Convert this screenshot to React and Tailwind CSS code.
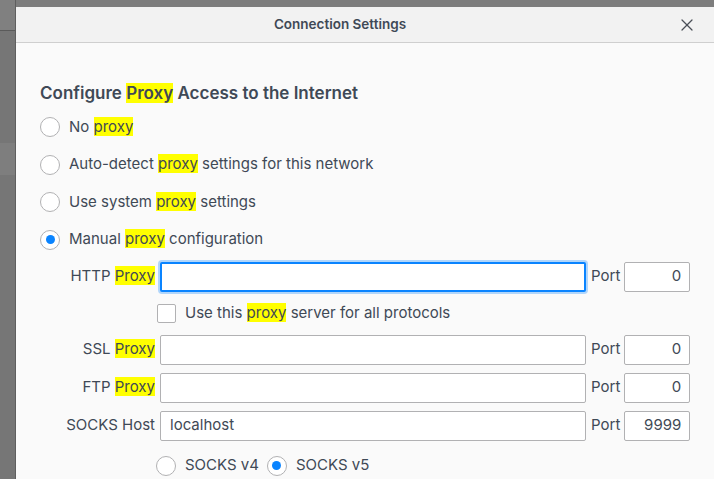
import { X } from 'lucide-react';

const ink = 'text-[#3f4956]';

// Yellow search-match highlight
function Hl({ children }) {
    return <span className="bg-[#ffff00]">{children}</span>;
}

function Radio({ checked }) {
    return (
        <span className="w-[20px] h-[20px] flex-shrink-0 rounded-full border border-[#b1b1b3] bg-white flex items-center justify-center">
            {checked && <span className="w-[9px] h-[9px] rounded-full bg-[#0a84ff]" />}
        </span>
    );
}

function RadioRow({ checked, children }) {
    return (
        <div className="flex items-center gap-[9px] h-[20px]">
            <Radio checked={checked} />
            <span className={`text-[15px] ${ink}`}>{children}</span>
        </div>
    );
}

function ProxyRow({ label, value, port, focused }) {
    return (
        <div className="flex items-center h-[30px]">
            <span className={`w-[115px] text-right text-[15px] ${ink} whitespace-nowrap`}>{label}</span>
            <div
                className={`ml-[5px] w-[426px] h-[30px] rounded-[2px] bg-white flex items-center px-[9px] text-[15px] ${ink} ${
                    focused
                        ? 'border-2 border-[#0a84ff] shadow-[0_0_0_2px_rgba(10,132,255,0.3)]'
                        : 'border border-[#b1b1b3]'
                }`}
            >
                {value}
            </div>
            <span className={`ml-[5px] text-[15px] ${ink}`}>Port</span>
            <div className={`ml-[4px] w-[66px] h-[30px] rounded-[2px] border border-[#b1b1b3] bg-white flex items-center justify-end pr-[8px] text-[15px] ${ink}`}>
                {port}
            </div>
        </div>
    );
}

export default function App() {
    return (
        <div className="w-[714px] h-[479px] overflow-hidden bg-[#767676] flex" style={{ fontFamily: 'Inter, "Noto Sans", sans-serif' }}>
            {/* Backdrop strip of the window behind */}
            <div className="w-[16px] flex-shrink-0 flex flex-col border-r border-[#5f5f5f]">
                <div className="h-[31px] bg-[#808080] border-b border-[#5a5a5a]" />
                <div className="h-[112px]" />
                <div className="h-[32px] bg-[#7e7e7e]" />
            </div>

            <div className="flex-1 flex flex-col pt-[7px] bg-[#7d7d7d]">
                <div className="flex-1 bg-[#fafafa] flex flex-col">
                    {/* Header */}
                    <div className="h-[36px] flex-shrink-0 bg-[#f2f2f2] border-b border-[#cfcfcf] flex items-center">
                        <span className={`flex-1 text-center pr-[13px] text-[13.5px] font-semibold ${ink}`}>Connection Settings</span>
                        <span className="w-[20px] h-[20px] mr-[17px] flex items-center justify-center">
                            <X className="w-[20px] h-[20px] text-[#4a4f57]" strokeWidth={1.5} />
                        </span>
                    </div>

                    {/* Body */}
                    <div className="pl-[24px] pt-[40px] flex flex-col">
                        <h1 className={`text-[17px] font-semibold leading-[21px] ${ink}`}>
                            Configure <Hl>Proxy</Hl> Access to the Internet
                        </h1>

                        <div className="mt-[13px] flex flex-col gap-[17.5px]">
                            <RadioRow>No <Hl>proxy</Hl></RadioRow>
                            <RadioRow>Auto-detect <Hl>proxy</Hl> settings for this network</RadioRow>
                            <RadioRow>Use system <Hl>proxy</Hl> settings</RadioRow>
                            <RadioRow checked>Manual <Hl>proxy</Hl> configuration</RadioRow>
                        </div>

                        <div className="mt-[12px] flex flex-col">
                            <ProxyRow label={<>HTTP <Hl>Proxy</Hl></>} port="0" focused />

                            <div className="mt-[12px] ml-[117px] flex items-center gap-[9px] h-[20px]">
                                <span className="w-[19px] h-[19px] rounded-[2px] border border-[#b1b1b3] bg-white" />
                                <span className={`text-[15px] ${ink}`}>Use this <Hl>proxy</Hl> server for all protocols</span>
                            </div>

                            <div className="mt-[11px] flex flex-col gap-[8px]">
                                <ProxyRow label={<>SSL <Hl>Proxy</Hl></>} port="0" />
                                <ProxyRow label={<>FTP <Hl>Proxy</Hl></>} port="0" />
                                <ProxyRow label="SOCKS Host" value="localhost" port="9999" />
                            </div>

                            <div className="mt-[15px] ml-[116px] flex items-center gap-[8px]">
                                <RadioRow>SOCKS v4</RadioRow>
                                <RadioRow checked>SOCKS v5</RadioRow>
                            </div>
                        </div>
                    </div>
                </div>
            </div>
        </div>
    );
}
